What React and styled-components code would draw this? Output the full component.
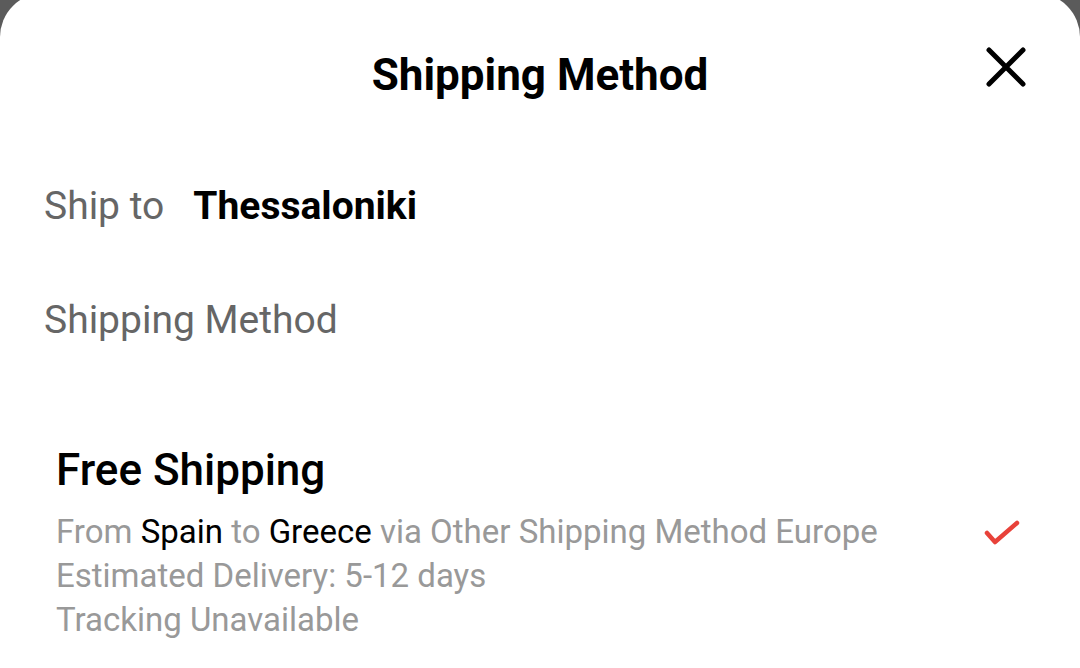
import React from 'react'
import styled, {createGlobalStyle} from 'styled-components'

const GlobalStyle = createGlobalStyle`
  html, body {
    margin: 0;
    padding: 0;
    background: #5b5b5b;
    overflow: hidden;
  }
  body {
    font-family: Roboto, "Liberation Sans", sans-serif;
  }
`

const Sheet = styled.div`
  box-sizing: border-box;
  margin-top: -7px;
  height: 675px;
  background: #fff;
  border-radius: 44px 44px 0 0;
  display: flex;
  flex-direction: column;
`

const Header = styled.header`
  height: 160px;
  display: grid;
  grid-template-columns: 1fr auto 1fr;
  align-items: center;
`

const Title = styled.h1`
  grid-column: 2;
  margin: 4px 0 0;
  font-size: 44px;
  font-weight: 700;
  color: #000;
  line-height: 50px;
`

const CloseButton = styled.button`
  grid-column: 3;
  justify-self: end;
  margin-right: 52px;
  margin-top: -12px;
  width: 44px;
  height: 44px;
  padding: 0;
  border: none;
  background: none;
  display: flex;
  align-items: center;
  justify-content: center;
`

const ShipRow = styled.div`
  margin-top: 31px;
  padding-left: 44px;
  display: flex;
  align-items: baseline;
  gap: 29px;
  line-height: 44px;
`

const Muted = styled.span`
  font-size: 39px;
  color: #666;
`

const City = styled.span`
  font-size: 39px;
  font-weight: 700;
  color: #000;
`

const SectionLabel = styled.div`
  margin-top: 70px;
  padding-left: 44px;
  font-size: 39px;
  line-height: 44px;
  color: #666;
`

const Option = styled.div`
  margin-top: 103px;
  padding: 0 60px 0 56px;
  display: flex;
  align-items: flex-start;
  justify-content: space-between;
`

const OptionInfo = styled.div`
  display: flex;
  flex-direction: column;
`

const OptionName = styled.div`
  font-size: 44px;
  font-weight: 500;
  line-height: 50px;
  color: #000;
`

const Details = styled.div`
  margin-top: 15px;
  font-size: 33px;
  line-height: 44px;
  color: #999;
`

const Strong = styled.span`
  color: #000;
`

const Check = styled.svg`
  margin-top: 74px;
  flex-shrink: 0;
`

export default function App() {
  return (
    <>
      <GlobalStyle />
      <Sheet>
        <Header>
          <Title>Shipping Method</Title>
          <CloseButton aria-label="Close">
            <svg width="44" height="44" viewBox="0 0 44 44">
              <path d="M5 5 L39 39 M39 5 L5 39" stroke="#000" strokeWidth="5" strokeLinecap="round" />
            </svg>
          </CloseButton>
        </Header>
        <ShipRow>
          <Muted>Ship to</Muted>
          <City>Thessaloniki</City>
        </ShipRow>
        <SectionLabel>Shipping Method</SectionLabel>
        <Option>
          <OptionInfo>
            <OptionName>Free Shipping</OptionName>
            <Details>
              From <Strong>Spain</Strong> to <Strong>Greece</Strong> via Other Shipping Method Europe
              <br />
              Estimated Delivery: 5-12 days
              <br />
              Tracking Unavailable
            </Details>
          </OptionInfo>
          <Check width="36" height="28" viewBox="0 0 36 28">
            <path d="M3 14 L11 23 L33 4" fill="none" stroke="#e8423a" strokeWidth="4.5" strokeLinecap="round" strokeLinejoin="round" />
          </Check>
        </Option>
      </Sheet>
    </>
  )
}
